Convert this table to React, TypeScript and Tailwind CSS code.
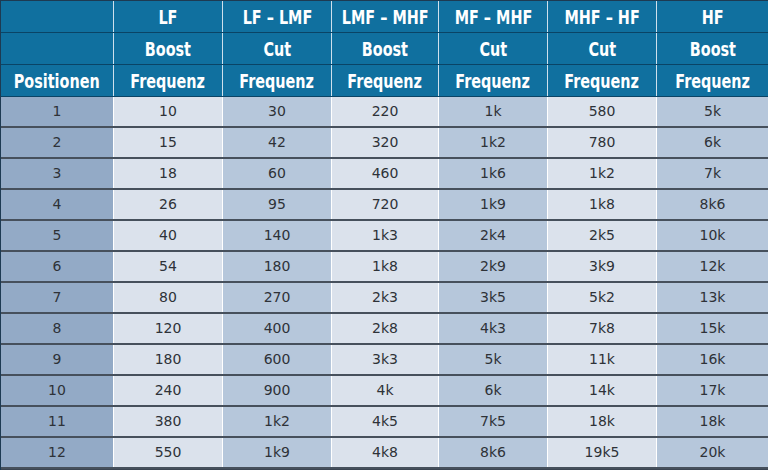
import React from "react";

const cols = "grid grid-cols-[112px_109px_109px_107px_109px_109px_1fr]";

const head1 = ["", "LF", "LF – LMF", "LMF – MHF", "MF – MHF", "MHF – HF", "HF"];
const head2 = ["", "Boost", "Cut", "Boost", "Cut", "Cut", "Boost"];
const head3 = ["Positionen", "Frequenz", "Frequenz", "Frequenz", "Frequenz", "Frequenz", "Frequenz"];

const data: string[][] = [
  ["1", "10", "30", "220", "1k", "580", "5k"],
  ["2", "15", "42", "320", "1k2", "780", "6k"],
  ["3", "18", "60", "460", "1k6", "1k2", "7k"],
  ["4", "26", "95", "720", "1k9", "1k8", "8k6"],
  ["5", "40", "140", "1k3", "2k4", "2k5", "10k"],
  ["6", "54", "180", "1k8", "2k9", "3k9", "12k"],
  ["7", "80", "270", "2k3", "3k5", "5k2", "13k"],
  ["8", "120", "400", "2k8", "4k3", "7k8", "15k"],
  ["9", "180", "600", "3k3", "5k", "11k", "16k"],
  ["10", "240", "900", "4k", "6k", "14k", "17k"],
  ["11", "380", "1k2", "4k5", "7k5", "18k", "18k"],
  ["12", "550", "1k9", "4k8", "8k6", "19k5", "20k"],
];

const colBg = [
  "bg-[#93aac6]",
  "bg-[#dbe2ec]",
  "bg-[#b6c7db]",
  "bg-[#dbe2ec]",
  "bg-[#b6c7db]",
  "bg-[#dbe2ec]",
  "bg-[#b6c7db]",
];

function HeadRow({ cells }: { cells: string[] }) {
  return (
    <div className={`${cols} h-[32px] border-b-[1.5px] border-[#0a4466]`}>
      {cells.map((c, i) => (
        <div
          key={i}
          className={`flex items-center justify-center text-white font-bold text-[20px] font-['DejaVu_Sans_Condensed','DejaVu_Sans',sans-serif] ${
            i > 0 ? "border-l-[1.5px] border-[#cfe0ec]" : ""
          }`}
        >
          <span className="inline-block whitespace-nowrap scale-x-[0.8]">{c}</span>
        </div>
      ))}
    </div>
  );
}

export default function App() {
  return (
    <div className="w-[768px] h-[470px] bg-[#3b4552] overflow-hidden border-l border-t border-[#1d3a52]">
      <div className="bg-[#10709f]">
        <HeadRow cells={head1} />
        <HeadRow cells={head2} />
        <HeadRow cells={head3} />
      </div>
      {data.map((row, r) => (
        <div key={r} className={`${cols} h-[31px] border-b-2 border-[#46505c]`}>
          {row.map((c, i) => (
            <div
              key={i}
              className={`flex items-center justify-center text-[14px] text-[#2e3238] font-['DejaVu_Sans',sans-serif] ${colBg[i]} ${
                i > 0 ? "border-l-[1.5px] border-white" : ""
              }`}
            >
              {c}
            </div>
          ))}
        </div>
      ))}
    </div>
  );
}
